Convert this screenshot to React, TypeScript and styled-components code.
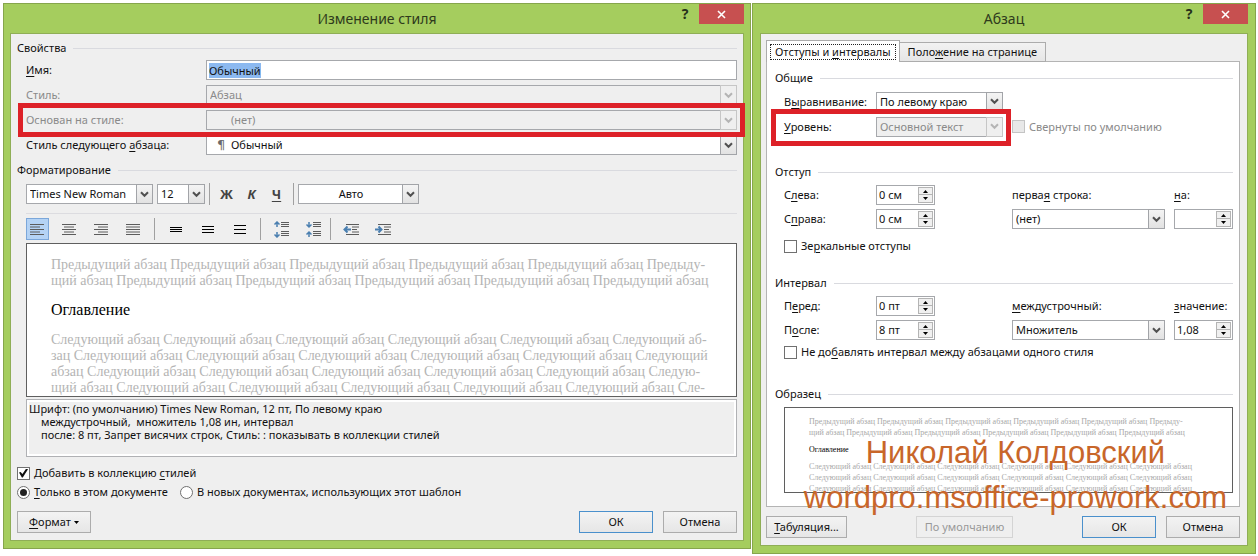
import React, { useEffect, useRef } from "react";
import styled, { createGlobalStyle, css } from "styled-components";

const GlobalStyle = createGlobalStyle`
  *, *::before, *::after { box-sizing: border-box; }
  body {
    margin: 0;
    background: #fff;
    color: #111;
    font: 11px/18px "Noto Sans", "Open Sans", sans-serif;
  }
  button, input, select { font: inherit; color: inherit; margin: 0; }
  u { text-decoration-thickness: 1px; text-underline-offset: 2px; }
`;

/* ---------- window frame ---------- */

const Desktop = styled.main`
  display: grid;
  grid-template-columns: 748fr 504fr;
  gap: 1px;
  align-items: start;
  min-width: 1120px;
  padding: 3px 2px 3px 3px;
`;

const Dialog = styled.section<{ $side: number }>`
  position: relative;
  min-width: 0;
  border: 1px solid #86a54c;
  background: #a5cd5e;
  padding: 0 ${(p) => p.$side}px 7px;
`;

const TitleBar = styled.header`
  display: grid;
  grid-template-columns: 1fr auto 1fr;
  height: 29px;
`;

const Title = styled.h1`
  grid-column: 2;
  margin: 0;
  font-size: 14px;
  line-height: 29px;
  font-weight: 400;
  color: #2e3a1c;
`;

const WindowButtons = styled.div`
  display: flex;
  justify-content: flex-end;
  align-items: flex-start;
`;

const HelpButton = styled.button`
  width: 28px;
  height: 20px;
  padding: 0;
  border: 0;
  background: none;
  color: #26301a;
  font-size: 14px;
  font-weight: 700;
  line-height: 20px;
`;

const CloseButton = styled.button`
  display: grid;
  place-items: center;
  width: 45px;
  height: 20px;
  padding: 0;
  border: 0;
  background: #c75050;
`;

const Body = styled.div<{ $tabbed?: boolean }>`
  border: 1px solid #8fae56;
  background: #efefef;
  padding: ${(p) => (p.$tabbed ? "6px 7px 7px 5px" : "5px 6px 7px")};
`;

/* ---------- groups and rows ---------- */

const GroupTitle = styled.h2<{ $top?: number }>`
  display: flex;
  align-items: center;
  gap: 7px;
  margin: ${(p) => p.$top ?? 0}px 0 0;
  font-size: 11px;
  line-height: 18px;
  font-weight: 400;

  &::after {
    content: "";
    flex: 1;
    height: 1px;
    background: #d9dadf;
  }
`;

const Rows = styled.div`
  display: flex;
  flex-direction: column;
  gap: 5px;
  margin: 3px 0 0 9px;
`;

const Row = styled.div`
  position: relative;
  display: grid;
  grid-template-columns: 180px minmax(0, 1fr);
  align-items: center;
`;

const Label = styled.label<{ $off?: boolean }>`
  white-space: nowrap;
  color: ${(p) => (p.$off ? "#8a8a8a" : "inherit")};
`;

const Marker = styled.span<{ $inset: string }>`
  position: absolute;
  inset: ${(p) => p.$inset};
  border: 5px solid #dd2128;
  pointer-events: none;
  z-index: 1;
`;

/* ---------- controls ---------- */

const fieldBox = css`
  width: 100%;
  height: 20px;
  border: 1px solid #a6a8ac;
  border-radius: 0;
  background: #fff;
  outline: none;
`;

const TextField = styled.input`
  ${fieldBox}
  padding: 2px;
  line-height: 14px;

  &::selection {
    background: #8cb9f0;
    color: #111;
  }
`;

const ComboBox = styled.span<{ $width?: number; $off?: boolean }>`
  position: relative;
  display: block;
  width: ${(p) => (p.$width ? `${p.$width}px` : "100%")};
  color: ${(p) => (p.$off ? "#8a8a8a" : "inherit")};
`;

const ComboSelect = styled.select<{ $indent?: number; $center?: boolean }>`
  ${fieldBox}
  display: block;
  appearance: none;
  padding: 0 18px 0 ${(p) => p.$indent ?? 3}px;
  line-height: 18px;
  text-align: ${(p) => (p.$center ? "center" : "left")};
  text-align-last: ${(p) => (p.$center ? "center" : "left")};

  &:disabled {
    background: #efefef;
    color: #8a8a8a;
    opacity: 1;
  }
`;

const ComboArrow = styled.span<{ $off?: boolean }>`
  position: absolute;
  top: 0;
  right: 0;
  bottom: 0;
  display: grid;
  place-items: center;
  width: 17px;
  border: 1px solid ${(p) => (p.$off ? "#c6c6c6" : "#a2a4a8")};
  background: ${(p) => (p.$off ? "#efefef" : "linear-gradient(#f4f4f4, #e2e2e2)")};
  color: ${(p) => (p.$off ? "#b4b4b4" : "#505050")};
  pointer-events: none;
`;

const Pilcrow = styled.span`
  position: absolute;
  left: 11px;
  top: 1px;
  color: #6a6a6a;
  font: 13px/18px "DejaVu Sans", sans-serif;
  pointer-events: none;
`;

interface ComboProps {
  id?: string;
  value: string;
  label?: string;
  off?: boolean;
  width?: number;
  indent?: number;
  center?: boolean;
  pilcrow?: boolean;
}

function Combo({ id, value, label, off, width, indent, center, pilcrow }: ComboProps) {
  return (
    <ComboBox $width={width} $off={off}>
      <ComboSelect id={id} aria-label={label} disabled={off} $indent={indent} $center={center}>
        <option>{value}</option>
      </ComboSelect>
      {pilcrow && <Pilcrow aria-hidden>¶</Pilcrow>}
      <ComboArrow $off={off}>
        <svg width="9" height="7" viewBox="0 0 9 7" fill="none" stroke="currentColor" strokeWidth="2">
          <path d="M1 1.2 4.5 4.8 8 1.2" />
        </svg>
      </ComboArrow>
    </ComboBox>
  );
}

const SpinBox = styled.span`
  display: flex;
  width: 59px;
  height: 20px;
  border: 1px solid #a6a8ac;
  background: #fff;
  padding: 1px;
`;

const SpinInput = styled.input`
  flex: 1;
  min-width: 0;
  padding: 0 0 0 1px;
  border: 0;
  background: none;
  outline: none;
  line-height: 16px;
`;

const SpinButtons = styled.span`
  display: grid;
  grid-template-rows: 1fr 1fr;
  width: 15px;
`;

const SpinButton = styled.button`
  display: grid;
  place-items: center;
  min-height: 0;
  padding: 0;
  border: 1px solid #b4b4b4;
  background: #f0f0f0;

  & + & { border-top-width: 0; }
`;

function Spinner({ id, value }: { id: string; value: string }) {
  return (
    <SpinBox>
      <SpinInput id={id} defaultValue={value} />
      <SpinButtons>
        <SpinButton aria-label="Больше">
          <svg width="5" height="3" viewBox="0 0 5 3"><path d="M0 3 2.5 0 5 3z" /></svg>
        </SpinButton>
        <SpinButton aria-label="Меньше">
          <svg width="5" height="3" viewBox="0 0 5 3"><path d="M0 0 2.5 3 5 0z" /></svg>
        </SpinButton>
      </SpinButtons>
    </SpinBox>
  );
}

const CheckLabel = styled.label<{ $off?: boolean }>`
  display: inline-flex;
  align-items: center;
  gap: 4px;
  white-space: nowrap;
  color: ${(p) => (p.$off ? "#8a8a8a" : "inherit")};
`;

const Check = styled.input.attrs({ type: "checkbox" })`
  appearance: none;
  display: grid;
  place-items: center;
  flex: none;
  width: 13px;
  height: 13px;
  border: 1px solid #707070;
  background: #fff;

  &:checked::before {
    content: "";
    width: 9px;
    height: 9px;
    background: #111;
    clip-path: polygon(0 45%, 18% 38%, 38% 62%, 80% 0, 100% 8%, 42% 100%, 32% 100%);
  }
  &:disabled {
    border-color: #c4c4c4;
    background: #e8e8e8;
  }
`;

const Radio = styled.input.attrs({ type: "radio" })`
  appearance: none;
  display: grid;
  place-items: center;
  flex: none;
  width: 13px;
  height: 13px;
  border: 1px solid #707070;
  border-radius: 50%;
  background: #fff;

  &:checked::before {
    content: "";
    width: 7px;
    height: 7px;
    border-radius: 50%;
    background: #222;
  }
`;

const PushButton = styled.button<{ $width: number; $primary?: boolean }>`
  width: ${(p) => p.$width}px;
  height: 22px;
  padding: 0;
  border: 1px solid ${(p) => (p.$primary ? "#4a90cc" : "#acacac")};
  background: linear-gradient(#f3f3f3, #e6e6e6);
  line-height: 18px;
  white-space: nowrap;

  &:disabled {
    border-color: #d4d4d4;
    background: #efefef;
    color: #999;
  }
`;

const Caret = styled.svg`
  margin-left: 3px;
  vertical-align: 2px;
`;

const Footer = styled.footer<{ $top: number }>`
  display: flex;
  gap: 10px;
  margin-top: ${(p) => p.$top}px;
`;

const Spacer = styled.span`
  flex: 1;
`;

/* ---------- formatting toolbars ---------- */

const Toolbar = styled.div`
  display: flex;
  align-items: center;
  height: 22px;
`;

const FontBar = styled(Toolbar)`
  gap: 4px;
  box-sizing: content-box;
  margin: 4px 0 0 9px;
  padding-bottom: 8px;
  border-bottom: 1px solid #dcdce0;
`;

const ParagraphBar = styled(Toolbar)`
  gap: 9px;
  margin: 4px 0 3px 9px;
`;

const ToolGroup = styled.div<{ $gap?: number }>`
  display: flex;
  gap: ${(p) => p.$gap ?? 0}px;
`;

const Divider = styled.span<{ $tight?: boolean }>`
  width: 1px;
  height: 22px;
  margin-left: ${(p) => (p.$tight ? -4 : 0)}px;
  background: #a0a0a0;
`;

const LetterButton = styled.button<{ $kind: "bold" | "italic" | "underline" }>`
  width: 25px;
  height: 20px;
  padding: 0;
  border: 0;
  background: none;
  color: #444;
  font-size: 13px;
  line-height: 20px;
  font-weight: 700;
  font-style: ${(p) => (p.$kind === "italic" ? "italic" : "normal")};
  text-decoration: ${(p) => (p.$kind === "underline" ? "underline" : "none")};
  text-underline-offset: 2px;
`;

const IconButton = styled.button<{ $active?: boolean }>`
  display: grid;
  place-items: center;
  width: 23px;
  height: 22px;
  padding: 0;
  border: 1px solid ${(p) => (p.$active ? "#7ba7da" : "transparent")};
  background: ${(p) => (p.$active ? "#b4d3f5" : "none")};
`;

/* Each line of an icon is [left, right, y]. */
type Line = [number, number, number];

function Strokes({ lines, color = "#5c5c5c", weight = 1 }: { lines: Line[]; color?: string; weight?: number }) {
  return (
    <path
      d={lines.map(([a, b, y]) => `M${a} ${y}H${b}`).join("")}
      stroke={color}
      strokeWidth={weight}
      fill="none"
    />
  );
}

function Icon({ children }: { children: React.ReactNode }) {
  return <svg width="17" height="17" viewBox="0 0 17 17" aria-hidden>{children}</svg>;
}

const alignments: { name: string; lines: Line[] }[] = [
  { name: "По левому краю", lines: [[1, 15, 3.5], [1, 11, 6], [1, 15, 8.5], [1, 11, 11], [1, 15, 13.5]] },
  { name: "По центру", lines: [[1, 15, 3.5], [3, 13, 6], [1, 15, 8.5], [3, 13, 11], [1, 15, 13.5]] },
  { name: "По правому краю", lines: [[1, 15, 3.5], [5, 15, 6], [1, 15, 8.5], [5, 15, 11], [1, 15, 13.5]] },
  { name: "По ширине", lines: [[1, 15, 3.5], [1, 15, 6], [1, 15, 8.5], [1, 15, 11], [1, 15, 13.5]] },
];

const spacings = [
  { name: "Одинарный интервал", pitch: 2 },
  { name: "Полуторный интервал", pitch: 3 },
  { name: "Двойной интервал", pitch: 4 },
];

const upArrow = (y: number) => `M4 ${y + 6}V${y + 1}M1.5 ${y + 3.5}L4 ${y + 1}L6.5 ${y + 3.5}`;
const downArrow = (y: number) => `M4 ${y}V${y + 5}M1.5 ${y + 2.5}L4 ${y + 5}L6.5 ${y + 2.5}`;

const paragraphGaps = [
  { name: "Увеличить интервал", arrows: upArrow(0) + downArrow(11) },
  { name: "Уменьшить интервал", arrows: downArrow(1) + upArrow(10) },
];

const indents = [
  { name: "Уменьшить отступ", arrow: "M8 8.5H1.5M4.5 5.5L1.5 8.5L4.5 11.5" },
  { name: "Увеличить отступ", arrow: "M0 8.5H6.5M3.5 5.5L6.5 8.5L3.5 11.5" },
];

/* ---------- previews ---------- */

const Preview = styled.div`
  overflow: hidden;
  margin-left: 9px;
  padding: 13px 0 0 24px;
  border: 1px solid #5f5f5f;
  background: #fff;
  font: 14px/16px "Liberation Serif", serif;
  color: #b4b4b4;
  white-space: nowrap;
`;

const PreviewHeading = styled.div`
  margin: 11px 0 12px;
  font-size: 16px;
  line-height: 20px;
  color: #000;
`;

const MiniPreview = styled(Preview)`
  height: 86px;
  margin-top: 4px;
  padding-top: 8px;
  font-size: 8px;
  line-height: 11px;
  color: #a8a8a8;
`;

const MiniHeading = styled.div`
  margin: 6px 0;
  line-height: 11px;
  color: #000;
`;

const Description = styled.div`
  margin: 2px 0 7px 9px;
  padding: 0 2px 13px 0;
  border: 1px solid #b0b1b4;
  box-shadow: inset 0 0 0 2px #fff;
  line-height: 13px;
  white-space: pre;
`;

const DescriptionText = styled.div`
  padding: 2px;
`;

const Indented = styled.div`
  padding-left: 12px;
`;

const Options = styled.div`
  display: flex;
  gap: 12px;
  margin-bottom: 1px;
`;

/* ---------- paragraph dialog ---------- */

const Tabs = styled.div`
  display: flex;
  align-items: flex-end;
  position: relative;
  z-index: 1;
  margin-bottom: -1px;
`;

const Tab = styled.button<{ $active?: boolean }>`
  border: 1px solid #acacac;
  line-height: 16px;
  white-space: nowrap;
  ${(p) =>
    p.$active
      ? css`
          height: 22px;
          padding: 3px;
          border-bottom: 0;
          background: #fff;
        `
      : css`
          height: 20px;
          padding: 1px 8px;
          border-left: 0;
          background: linear-gradient(#f2f2f2, #e6e6e6);
        `}
`;

const FocusRing = styled.span`
  display: block;
  padding: 0 4px;
  border: 1px dotted #222;
  line-height: 14px;
`;

const TabPanel = styled.div`
  border: 1px solid #b4b4b4;
  background: #fff;
  padding: 7px 6px 13px 8px;
`;

const Fields = styled.div`
  display: grid;
  grid-template-columns: 83px minmax(0, 1fr) 153px 59px;
  gap: 4px 9px;
  align-items: center;
  margin: 4px 0 0 9px;
`;

const FieldPair = styled.div`
  position: relative;
  grid-column: span 2;
  display: grid;
  grid-template-columns: subgrid;
  align-items: center;
  min-height: 21px;
`;

const CheckRow = styled.div<{ $top: number }>`
  display: flex;
  margin: ${(p) => p.$top}px 0 0 9px;
`;

const Watermark = styled.div`
  position: absolute;
  right: 28px;
  bottom: 33px;
  z-index: 2;
  font: 31px/45px "Liberation Sans", sans-serif;
  color: #c8662a;
  text-align: center;
  white-space: nowrap;
  pointer-events: none;
`;

const repeat = (text: string, count: number) => Array(count).fill(text).join(" ");
const PREV = "Предыдущий абзац";
const NEXT = "Следующий абзац";

function WindowTitle({ text }: { text: string }) {
  return (
    <TitleBar>
      <Title>{text}</Title>
      <WindowButtons>
        <HelpButton aria-label="Справка">?</HelpButton>
        <CloseButton aria-label="Закрыть">
          <svg width="9" height="9" viewBox="0 0 9 9" stroke="#fff" strokeWidth="1.6">
            <path d="M1 1 8 8M8 1 1 8" />
          </svg>
        </CloseButton>
      </WindowButtons>
    </TitleBar>
  );
}

function StyleDialog() {
  const nameRef = useRef<HTMLInputElement>(null);
  useEffect(() => {
    nameRef.current?.focus();
    nameRef.current?.select();
  }, []);

  return (
    <Dialog $side={6}>
      <WindowTitle text="Изменение стиля" />
      <Body>
        <GroupTitle>Свойства</GroupTitle>
        <Rows>
          <Row>
            <Label htmlFor="name"><u>И</u>мя:</Label>
            <TextField id="name" ref={nameRef} defaultValue="Обычный" />
          </Row>
          <Row>
            <Label htmlFor="kind" $off>Стиль:</Label>
            <Combo id="kind" value="Абзац" off />
          </Row>
          <Row>
            <Label htmlFor="based" $off>Основан на стиле:</Label>
            <Combo id="based" value="(нет)" off indent={24} />
            <Marker $inset="-7px -8px" />
          </Row>
          <Row>
            <Label htmlFor="next">Стиль следующего <u>а</u>бзаца:</Label>
            <Combo id="next" value="Обычный" indent={24} pilcrow />
          </Row>
        </Rows>

        <GroupTitle $top={6}>Форматирование</GroupTitle>
        <FontBar>
          <Combo label="Шрифт" value="Times New Roman" width={127} />
          <Combo label="Размер" value="12" width={48} />
          <Divider />
          <ToolGroup>
            <LetterButton $kind="bold">Ж</LetterButton>
            <LetterButton $kind="italic">К</LetterButton>
            <LetterButton $kind="underline">Ч</LetterButton>
          </ToolGroup>
          <Divider />
          <Combo label="Цвет" value="Авто" width={121} center />
        </FontBar>
        <ParagraphBar>
          <ToolGroup $gap={9}>
            {alignments.map((a, i) => (
              <IconButton key={a.name} aria-label={a.name} $active={i === 0}>
                <Icon><Strokes lines={a.lines} /></Icon>
              </IconButton>
            ))}
          </ToolGroup>
          <Divider />
          <ToolGroup $gap={9}>
            {spacings.map(({ name, pitch }) => (
              <IconButton key={name} aria-label={name}>
                <Icon>
                  <Strokes
                    color="#000"
                    weight={1.2}
                    lines={[[3, 15, 8.5 - pitch], [3, 15, 8.5], [3, 15, 8.5 + pitch]]}
                  />
                </Icon>
              </IconButton>
            ))}
          </ToolGroup>
          <Divider />
          <ToolGroup $gap={9}>
            {paragraphGaps.map(({ name, arrows }) => (
              <IconButton key={name} aria-label={name}>
                <Icon>
                  <path d={arrows} stroke="#4a7fb0" strokeWidth="1.5" fill="none" />
                  <Strokes lines={[[8, 16, 1.5], [8, 16, 3.5], [8, 16, 5.5], [8, 16, 10.5], [8, 16, 12.5], [8, 16, 14.5]]} />
                </Icon>
              </IconButton>
            ))}
          </ToolGroup>
          <Divider $tight />
          <ToolGroup $gap={9}>
            {indents.map(({ name, arrow }) => (
              <IconButton key={name} aria-label={name}>
                <Icon>
                  <Strokes lines={[[3, 16, 3.5], [9, 16, 6], [9, 14, 8.5], [9, 16, 11], [3, 16, 13.5]]} />
                  <path d={arrow} stroke="#4a7fb0" strokeWidth="2" fill="none" />
                </Icon>
              </IconButton>
            ))}
          </ToolGroup>
        </ParagraphBar>

        <Preview>
          <div>{repeat(PREV, 5)} Предыду-</div>
          <div>щий абзац {repeat(PREV, 5)}</div>
          <PreviewHeading>Оглавление</PreviewHeading>
          <div>{repeat(NEXT, 5)} Следующий аб-</div>
          <div>зац {repeat(NEXT, 5)} Следующий</div>
          <div>абзац {repeat(NEXT, 5)} Следую-</div>
          <div>щий абзац {repeat(NEXT, 5)} Сле-</div>
        </Preview>
        <Description>
          <DescriptionText>
            <div>Шрифт: (по умолчанию) Times New Roman, 12 пт, По левому краю</div>
            <Indented>{"междустрочный,  множитель 1,08 ин, интервал"}</Indented>
            <Indented>после: 8 пт, Запрет висячих строк, Стиль: : показывать в коллекции стилей</Indented>
          </DescriptionText>
        </Description>

        <Options>
          <CheckLabel><Check defaultChecked /><span>Добавить в коллекцию <u>с</u>тилей</span></CheckLabel>
        </Options>
        <Options>
          <CheckLabel><Radio name="scope" defaultChecked /><span><u>Т</u>олько в этом документе</span></CheckLabel>
          <CheckLabel><Radio name="scope" /><span>В новых документах, использующих этот шаблон</span></CheckLabel>
        </Options>

        <Footer $top={10}>
          <PushButton $width={74}>
            <u>Ф</u>ормат
            <Caret width="5" height="3" viewBox="0 0 5 3"><path d="M0 0 2.5 3 5 0z" /></Caret>
          </PushButton>
          <Spacer />
          <PushButton $width={74} $primary>ОК</PushButton>
          <PushButton $width={74}>Отмена</PushButton>
        </Footer>
      </Body>
    </Dialog>
  );
}

function ParagraphDialog() {
  return (
    <Dialog $side={7}>
      <WindowTitle text="Абзац" />
      <Body $tabbed>
        <Tabs role="tablist">
          <Tab role="tab" aria-selected $active>
            <FocusRing>Отступы и <u>и</u>нтервалы</FocusRing>
          </Tab>
          <Tab role="tab">Поло<u>ж</u>ение на странице</Tab>
        </Tabs>
        <TabPanel>
          <GroupTitle>Общие</GroupTitle>
          <Fields>
            <FieldPair>
              <Label htmlFor="align">В<u>ы</u>равнивание:</Label>
              <Combo id="align" value="По левому краю" />
            </FieldPair>
            <span />
            <span />
            <FieldPair>
              <Label htmlFor="level"><u>У</u>ровень:</Label>
              <Combo id="level" value="Основной текст" off />
              <Marker $inset="-7px -8px -9px -13px" />
            </FieldPair>
            <CheckLabel $off><Check disabled /><span>Свернуты по умолчанию</span></CheckLabel>
          </Fields>

          <GroupTitle $top={26}>Отступ</GroupTitle>
          <Fields>
            <Label htmlFor="left">С<u>л</u>ева:</Label>
            <Spinner id="left" value="0 см" />
            <Label htmlFor="first">перва<u>я</u> строка:</Label>
            <Label htmlFor="by"><u>н</u>а:</Label>
            <Label htmlFor="right">С<u>п</u>рава:</Label>
            <Spinner id="right" value="0 см" />
            <Combo id="first" value="(нет)" />
            <Spinner id="by" value="" />
          </Fields>
          <CheckRow $top={8}>
            <CheckLabel><Check /><span>Зе<u>р</u>кальные отступы</span></CheckLabel>
          </CheckRow>

          <GroupTitle $top={19}>Интервал</GroupTitle>
          <Fields>
            <Label htmlFor="before">П<u>е</u>ред:</Label>
            <Spinner id="before" value="0 пт" />
            <Label htmlFor="line"><u>м</u>еждустрочный:</Label>
            <Label htmlFor="amount"><u>з</u>начение:</Label>
            <Label htmlFor="after">П<u>о</u>сле:</Label>
            <Spinner id="after" value="8 пт" />
            <Combo id="line" value="Множитель" />
            <Spinner id="amount" value="1,08" />
          </Fields>
          <CheckRow $top={3}>
            <CheckLabel><Check /><span>Не до<u>б</u>авлять интервал между абзацами одного стиля</span></CheckLabel>
          </CheckRow>

          <GroupTitle $top={24}>Образец</GroupTitle>
          <MiniPreview>
            <div>{repeat(PREV, 5)} Предыду-</div>
            <div>щий абзац {repeat(PREV, 5)}</div>
            <MiniHeading>Оглавление</MiniHeading>
            <div>{repeat(NEXT, 6)}</div>
            <div>{repeat(NEXT, 6)}</div>
            <div>{repeat(NEXT, 6)}</div>
          </MiniPreview>
        </TabPanel>
        <Footer $top={9}>
          <PushButton $width={81}><u>Т</u>абуляция...</PushButton>
          <Spacer />
          <PushButton $width={97} disabled>По умолчанию</PushButton>
          <Spacer />
          <PushButton $width={74} $primary>ОК</PushButton>
          <PushButton $width={74}>Отмена</PushButton>
        </Footer>
      </Body>
      <Watermark>
        <div>Николай Колдовский</div>
        <div>wordpro.msoffice-prowork.com</div>
      </Watermark>
    </Dialog>
  );
}

export default function App() {
  return (
    <Desktop>
      <GlobalStyle />
      <StyleDialog />
      <ParagraphDialog />
    </Desktop>
  );
}
